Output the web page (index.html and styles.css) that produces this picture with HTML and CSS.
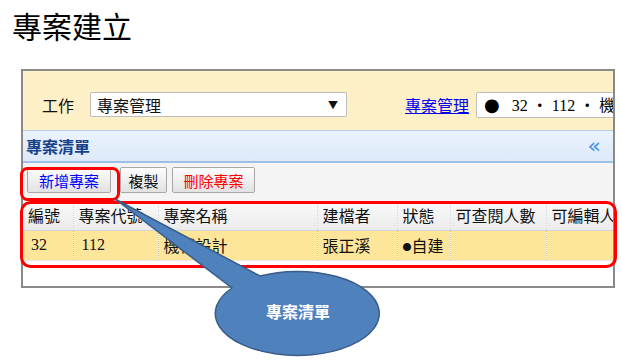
FILE: index.html
```html
<!DOCTYPE html>
<html lang="zh-Hant">
<head>
    <meta charset="UTF-8">
    <title>專案建立</title>
    <link rel="stylesheet" href="styles.css">
</head>
<body>
    <h1 class="doc-title">專案建立</h1>

    <div class="frame">
        <!-- work selector -->
        <div class="work-bar">
            <span class="work-label">工作</span>
            <div class="work-select">
                <span>專案管理</span>
                <span class="arrow">▼</span>
            </div>
            <a href="#" class="work-link">專案管理</a>
            <div class="work-current"><span class="big-dot">●</span>32 ・ 112 ・ 機械</div>
        </div>

        <!-- project list panel -->
        <div class="panel-head">
            <span class="panel-title">專案清單</span>
            <span class="collapse">«</span>
        </div>

        <div class="toolbar">
            <button class="tool-btn btn-new">新增專案</button>
            <button class="tool-btn btn-copy">複製</button>
            <button class="tool-btn btn-del">刪除專案</button>
        </div>

        <table class="grid">
            <thead>
                <tr>
                    <th class="c-no">編號</th>
                    <th class="c-code">專案代號</th>
                    <th class="c-name">專案名稱</th>
                    <th class="c-owner">建檔者</th>
                    <th class="c-state">狀態</th>
                    <th class="c-view">可查閱人數</th>
                    <th class="c-edit">可編輯人</th>
                </tr>
            </thead>
            <tbody>
                <tr>
                    <td class="num">32</td>
                    <td class="num">112</td>
                    <td>機械設計</td>
                    <td>張正溪</td>
                    <td><span class="dot">●</span>自建</td>
                    <td></td>
                    <td></td>
                </tr>
            </tbody>
        </table>
    </div>

    <!-- annotation layer -->
    <svg class="notes" width="622" height="363" viewBox="0 0 622 363">
        <rect x="21.5" y="168.5" width="97" height="31" rx="6" fill="none" stroke="#ff0000" stroke-width="3"/>
        <rect x="21.5" y="202.5" width="594" height="64" rx="9" fill="none" stroke="#ff0000" stroke-width="3"/>
        <path d="M115 199 L260 276 A82 42 0 1 1 232 288 Z" fill="#4f81bd" stroke="#385d8a" stroke-width="1.5"/>
        <text x="298" y="318" class="note-text" text-anchor="middle">專案清單</text>
    </svg>
</body>
</html>
```

FILE: styles.css
```css
body {
    margin: 0;
    background: #fff;
    font-family: "Noto Sans CJK TC", sans-serif;
    position: relative;
    width: 622px;
    height: 363px;
    overflow: hidden;
}
.doc-title {
    margin: 0;
    padding: 9px 0 0 12px;
    height: 60px;
    box-sizing: border-box;
    font-family: "Liberation Serif", "Noto Sans CJK TC", serif;
    font-weight: normal;
    font-size: 30px;
    line-height: 38px;
    color: #000;
}
.frame {
    margin: 9px 0 0 21px;
    width: 594px;
    height: 219px;
    box-sizing: border-box;
    border: 2px solid #8a8a8a;
    overflow: hidden;
    background: #fff;
}
.work-bar {
    height: 60px;
    background: #fdf0c6;
    border-bottom: 1px solid #b8cde8;
    display: flex;
    align-items: center;
    padding: 8px 0 0 19px;
    box-sizing: border-box;
    white-space: nowrap;
    font-size: 16px;
}
.work-bar > * {
    flex-shrink: 0;
}
.work-label {
    width: 48px;
    color: #111;
}
.work-select {
    width: 257px;
    height: 25px;
    box-sizing: border-box;
    background: #fff;
    border: 1px solid #bdbdbd;
    border-radius: 2px;
    display: flex;
    align-items: center;
    justify-content: space-between;
    padding: 0 8px 0 6px;
    font-size: 16px;
    color: #111;
}
.work-select .arrow {
    font-size: 10px;
}
.work-link {
    margin-left: 58px;
    color: #0000ee;
    font-family: "Liberation Serif", "Noto Sans CJK TC", serif;
    font-size: 16px;
}
.work-current {
    margin-left: 7px;
    height: 26px;
    width: 160px;
    box-sizing: border-box;
    border: 1px solid #bdbdbd;
    border-radius: 2px;
    background: #fff;
    padding: 0 0 0 7px;
    line-height: 24px;
    font-family: "Liberation Serif", "Noto Sans CJK TC", serif;
    font-size: 16px;
    color: #000;
}
.big-dot {
    font-family: "DejaVu Sans", sans-serif;
    font-size: 18px;
    margin-right: 12px;
}
.panel-head {
    height: 32px;
    background: linear-gradient(#eaf2fd, #dde9f9);
    border-bottom: 2px solid #9fc0e6;
    display: flex;
    align-items: center;
    justify-content: space-between;
    padding: 0 12px 0 3px;
    box-sizing: border-box;
}
.panel-title {
    font-weight: bold;
    font-size: 16px;
    color: #15428b;
}
.collapse {
    color: #4a90e0;
    font-size: 22px;
    line-height: 22px;
    font-family: "DejaVu Sans", sans-serif;
}
.toolbar {
    height: 38px;
    background: #f4f4f4;
    display: flex;
    align-items: center;
    padding: 0 0 4px 4px;
    box-sizing: border-box;
}
.tool-btn {
    height: 26px;
    padding: 0;
    border: 1px solid #a8a8a8;
    border-radius: 2px;
    background: linear-gradient(#fdfdfd, #e2e2e2);
    font-family: "Noto Sans CJK TC", sans-serif;
    font-size: 15px;
    color: #111;
    cursor: pointer;
}
.btn-new {
    width: 84px;
    color: #0000ff;
}
.btn-copy {
    width: 47px;
    margin-left: 9px;
}
.btn-del {
    width: 83px;
    margin-left: 5px;
    color: #ff0000;
}
.grid {
    border-collapse: collapse;
    table-layout: fixed;
    width: 623px;
    font-size: 16px;
    color: #111;
}
.grid th,
.grid td {
    box-sizing: border-box;
    height: 29px;
    padding: 0 5px;
    white-space: nowrap;
    overflow: hidden;
    text-align: left;
}
.grid th {
    font-weight: normal;
    background: linear-gradient(#fafafa, #ebebeb);
    border-right: 1px dotted #cfcfcf;
    border-bottom: 1px solid #d4d4d4;
}
.grid td {
    height: 30px;
    background: #fde59a;
    border-right: 1px dotted #d8c68a;
    border-bottom: 1px solid #e7e7e7;
}
.grid .num {
    font-family: "Liberation Serif", serif;
    font-size: 16px;
    padding-left: 8px;
}
.c-no { width: 50px; }
.c-code { width: 85px; }
.c-name { width: 159px; }
.c-owner { width: 80px; }
.c-state { width: 53px; }
.c-view { width: 96px; }
.c-edit { width: 100px; }
.dot {
    font-size: 9px;
    vertical-align: 2px;
}
.notes {
    position: absolute;
    left: 0;
    top: 0;
}
.note-text {
    fill: #fff;
    font-family: "Noto Sans CJK TC", sans-serif;
    font-weight: bold;
    font-size: 16px;
}
```
